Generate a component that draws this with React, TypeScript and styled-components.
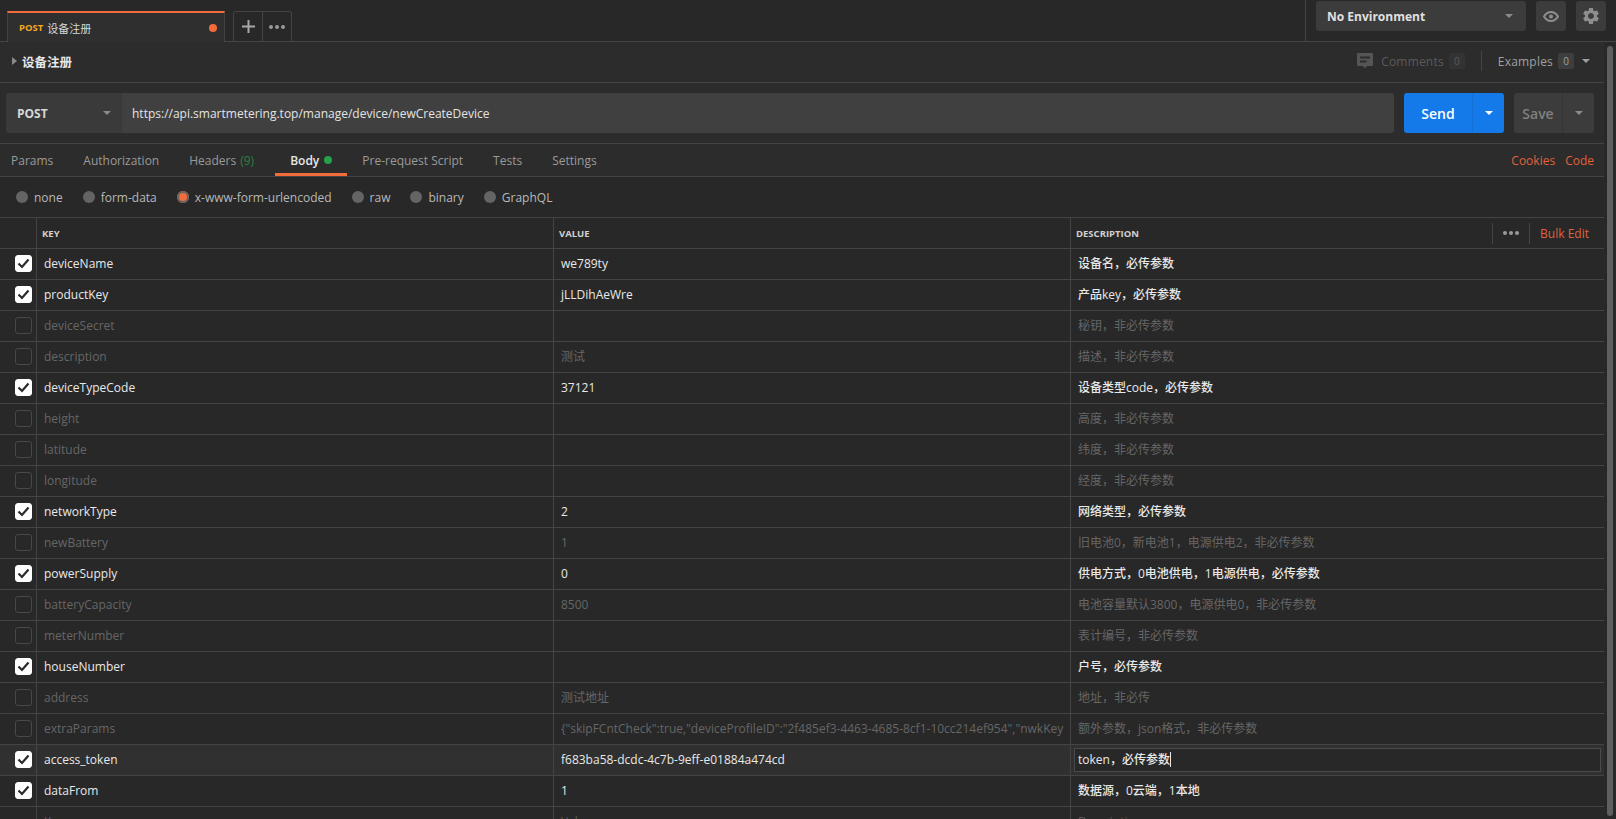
import React from "react";
import styled, { createGlobalStyle } from "styled-components";
import { MdSettings } from "react-icons/md";

const FONT = `"Open Sans", "Noto Sans CJK SC", sans-serif`;
const LINE = "#444444";
const ORANGE = "#f26b3a";

const Global = createGlobalStyle`
  html, body { margin: 0; padding: 0; background: #282828; overflow: hidden; }
  * { box-sizing: border-box; }
`;

const Page = styled.div`
  width: 1616px; height: 819px; overflow: hidden; background: #282828;
  font: 12px ${FONT}; color: #b0b0b0; display: flex; flex-direction: column;
`;

/* top bar */
const TopBar = styled.header`
  height: 42px; flex: none; display: flex; align-items: flex-end; padding-left: 7px;
  border-bottom: 1px solid ${LINE}; background: #282828;
`;
const RequestTab = styled.div`
  width: 218px; height: 31px; margin-bottom: -1px; display: flex; align-items: center;
  padding: 0 7px 0 11px; background: #2f2f2f; border-top: 2px solid ${ORANGE};
  border-left: 1px solid ${LINE}; border-right: 1px solid ${LINE}; font-size: 11px; color: #d8d8d8;
  position: relative;
`;
const TabMethod = styled.span`
  color: #f5a623; font-size: 9.5px; font-weight: 700; margin-right: 4px;
`;
const TabDot = styled.span`
  width: 8px; height: 8px; border-radius: 50%; background: ${ORANGE}; margin-left: auto;
`;
const TabTools = styled.div`
  margin-left: 8px; width: 59px; height: 30px; display: flex;
  border: 1px solid ${LINE}; border-bottom: 0; border-radius: 3px 3px 0 0;
`;
const TabTool = styled.div<{ $divided?: boolean }>`
  flex: 1; display: flex; align-items: center; justify-content: center; color: #999;
  border-left: ${(p) => (p.$divided ? `1px solid ${LINE}` : "0")};
`;
const TopRight = styled.div`
  margin-left: auto; height: 41px; align-self: flex-start; display: flex; align-items: flex-start;
  border-left: 1px solid ${LINE}; padding: 1px 10px 0 10px; gap: 10px;
`;
const EnvSelect = styled.div`
  width: 210px; height: 30px; background: #3c3c3c; border-radius: 3px; display: flex; align-items: center;
  padding: 0 13px 0 11px; justify-content: space-between; color: #e0e0e0; font-weight: 700; font-size: 12px;
`;
const IconButton = styled.div`
  width: 30px; height: 30px; background: #3c3c3c; border-radius: 3px; display: flex;
  align-items: center; justify-content: center; color: #8e8e8e;
`;
const Caret = styled.span<{ $color?: string; $size?: number }>`
  display: inline-block; width: 0; height: 0; flex: none;
  border-left: ${(p) => p.$size ?? 4}px solid transparent; border-right: ${(p) => p.$size ?? 4}px solid transparent;
  border-top: ${(p) => p.$size ?? 4}px solid ${(p) => p.$color ?? "#8a8a8a"};
`;
const ExamplesCaret = styled(Caret)`margin-left: 8px;`;

/* content */
const Workspace = styled.div`flex: 1; min-height: 0; display: flex;`;
const Main = styled.main`width: 1604px; flex: none; background: #2c2c2c;`;
const ScrollTrack = styled.div`flex: 1; padding: 4px 3px 0 3px; background: #282828;`;
const ScrollThumb = styled.div`height: 770px; width: 6px; border-radius: 3px; background: #5e5e5e;`;

const NameRow = styled.div`
  height: 41px; display: flex; align-items: center; padding: 0 14px 2px 12px;
  border-bottom: 1px solid ${LINE};
`;
const NameCaret = styled.span`
  width: 0; height: 0; border-top: 4px solid transparent; border-bottom: 4px solid transparent;
  border-left: 5px solid #8a8a8a; margin-right: 5px;
`;
const RequestName = styled.h1`
  margin: 0; font: 700 12.5px ${FONT}; color: #e6e6e6;
`;
const NameMeta = styled.div`margin-left: auto; display: flex; align-items: center;`;
const MetaLabel = styled.span<{ $dim?: boolean }>`
  color: ${(p) => (p.$dim ? "#5b5b5b" : "#a0a0a0")}; font-size: 12px; margin: 0 5px 0 8px; letter-spacing: 0.2px;
`;
const CountBadge = styled.span<{ $dim?: boolean }>`
  width: 16px; height: 16px; border-radius: 2px; display: flex; align-items: center; justify-content: center;
  font-size: 10px; background: ${(p) => (p.$dim ? "#333" : "#3e3e3e")}; color: ${(p) => (p.$dim ? "#5b5b5b" : "#a0a0a0")};
`;
const MetaDivider = styled.span`width: 1px; height: 20px; background: ${LINE}; margin: 0 8px 0 16px;`;

const UrlRow = styled.div`
  height: 61px; padding: 10px 10px 0 6px; display: flex; border-bottom: 1px solid ${LINE};
`;
const MethodSelect = styled.div`
  width: 116px; height: 40px; background: #3a3a3a; border-radius: 3px 0 0 3px; display: flex;
  align-items: center; justify-content: space-between; padding: 0 11px; color: #d8d8d8; font-weight: 700;
`;
const UrlInput = styled.div`
  width: 1272px; height: 40px; background: #404040; border-radius: 0 3px 3px 0; display: flex;
  align-items: center; padding: 0 10px; color: #e4e4e4; font-size: 12px;
`;
const SplitButton = styled.div<{ $primary?: boolean; $width: number; $main: number }>`
  width: ${(p) => p.$width}px; height: 40px; border-radius: 3px; margin-left: 10px; display: grid;
  grid-template-columns: ${(p) => p.$main}px 1fr;
  background: ${(p) => (p.$primary ? "#147ae9" : "#3c3c3c")};
  color: ${(p) => (p.$primary ? "#fff" : "#808080")};
  font-size: 14px; font-weight: 600;
`;
const SplitLabel = styled.div<{ $primary?: boolean }>`
  display: flex; align-items: center; justify-content: center;
  border-right: 1px solid ${(p) => (p.$primary ? "#1270d4" : "#343434")};
`;
const SplitArrow = styled.div`display: flex; align-items: center; justify-content: center;`;

const TabsRow = styled.nav`
  height: 33px; display: flex; border-bottom: 1px solid ${LINE}; position: relative;
`;
const TabItem = styled.div<{ $active?: boolean; $left?: number; $right?: number }>`
  padding: 3px ${(p) => p.$right ?? 15}px 0 ${(p) => p.$left ?? 15}px; height: 32px; display: flex; align-items: center;
  color: ${(p) => (p.$active ? "#e6e6e6" : "#9a9a9a")}; font-size: 12px;
  font-weight: ${(p) => (p.$active ? 600 : 400)};
  border-bottom: 3px solid ${(p) => (p.$active ? ORANGE : "transparent")};
`;
const HeaderCount = styled.span`color: #26833f; margin-left: 4px;`;
const BodyDot = styled.span`width: 8px; height: 8px; border-radius: 50%; background: #26a04b; margin-left: 5px;`;
const TabLinks = styled.div`margin-left: auto; display: flex; align-items: center; gap: 10px; padding-right: 10px; color: #e0623a;`;

const BodyPanel = styled.section`background: #282828;`;
const BodyTypes = styled.div`
  height: 41px; display: flex; align-items: center; padding-left: 16px; border-bottom: 1px solid ${LINE};
`;
const RadioOption = styled.label`
  display: flex; align-items: center; color: #b8b8b8; font-size: 12px; margin-right: 20px;
`;
const Radio = styled.span<{ $on?: boolean }>`
  width: 12px; height: 12px; border-radius: 50%; background: ${(p) => (p.$on ? ORANGE : "#646464")};
  margin-right: 6px; flex: none;
  box-shadow: ${(p) => (p.$on ? "inset 0 0 0 2px #646464" : "none")};
`;

const Grid = styled.div`
  display: grid; grid-template-columns: 37px 517px 517px 533px;
`;
const HeadRow = styled(Grid)`height: 31px; border-bottom: 1px solid ${LINE};`;
const HeadCell = styled.div<{ $last?: boolean }>`
  border-right: ${(p) => (p.$last ? "0" : `1px solid ${LINE}`)}; display: flex; align-items: center;
  padding-left: 5px; font-size: 9.5px; font-weight: 700; color: #d0d0d0;
`;
const BulkTools = styled.div`margin-left: auto; display: flex; align-items: center; height: 21px; padding-right: 15px;`;
const BulkDots = styled.span`
  border-left: 1px solid ${LINE}; border-right: 1px solid ${LINE}; height: 21px; width: 38px;
  display: flex; align-items: center; justify-content: center; color: #9a9a9a; margin-right: 10px;
`;
const BulkEdit = styled.span`color: #e0623a; font-size: 12px; font-weight: 400;`;

const Row = styled(Grid)<{ $hover?: boolean }>`
  height: 31px; border-bottom: 1px solid ${LINE}; background: ${(p) => (p.$hover ? "#303030" : "#282828")};
`;
const CheckCell = styled.div`
  border-right: 1px solid ${LINE}; display: flex; align-items: center; padding: 0 0 1px 15px;
`;
const CheckBox = styled.span<{ $on: boolean }>`
  width: 17px; height: 17px; border-radius: 3px; display: flex; align-items: center; justify-content: center;
  background: ${(p) => (p.$on ? "#fff" : "transparent")}; border: 1px solid ${(p) => (p.$on ? "#fff" : "#484848")};
`;
const Cell = styled.div<{ $on: boolean; $last?: boolean; $desc?: boolean }>`
  border-right: ${(p) => (p.$last ? "0" : `1px solid ${LINE}`)}; display: flex; align-items: center;
  padding: 0 6px 2px 7px; font-size: 12px; white-space: nowrap; overflow: hidden;
  font-weight: ${(p) => (p.$desc && p.$on ? 500 : 400)};
  color: ${(p) => (p.$on ? "#e8e8e8" : "#666666")};
`;
const EditCell = styled.div`display: flex; align-items: center; padding: 0 3px; font-weight: 500;`;
const EditBox = styled.div`
  flex: 1; height: 24px; border: 1px solid #4a4a4a; display: flex; align-items: center;
  padding: 0 0 2px 3px; background: #282828; color: #e8e8e8;
`;
const Caretbar = styled.span`width: 1px; height: 15px; background: #e8e8e8;`;
const Placeholder = styled.span`color: #5c5c5c;`;

type P = { k: string; v?: string; d: string; on?: boolean };
const rows: P[] = [
  { k: "deviceName", v: "we789ty", d: "设备名，必传参数", on: true },
  { k: "productKey", v: "jLLDihAeWre", d: "产品key，必传参数", on: true },
  { k: "deviceSecret", d: "秘钥，非必传参数" },
  { k: "description", v: "测试", d: "描述，非必传参数" },
  { k: "deviceTypeCode", v: "37121", d: "设备类型code，必传参数", on: true },
  { k: "height", d: "高度，非必传参数" },
  { k: "latitude", d: "纬度，非必传参数" },
  { k: "longitude", d: "经度，非必传参数" },
  { k: "networkType", v: "2", d: "网络类型，必传参数", on: true },
  { k: "newBattery", v: "1", d: "旧电池0，新电池1，电源供电2，非必传参数" },
  { k: "powerSupply", v: "0", d: "供电方式，0电池供电，1电源供电，必传参数", on: true },
  { k: "batteryCapacity", v: "8500", d: "电池容量默认3800，电源供电0，非必传参数" },
  { k: "meterNumber", d: "表计编号，非必传参数" },
  { k: "houseNumber", d: "户号，必传参数", on: true },
  { k: "address", v: "测试地址", d: "地址，非必传" },
  { k: "extraParams", v: '{"skipFCntCheck":true,"deviceProfileID":"2f485ef3-4463-4685-8cf1-10cc214ef954","nwkKey', d: "额外参数，json格式，非必传参数" },
  { k: "access_token", v: "f683ba58-dcdc-4c7b-9eff-e01884a474cd", d: "token，必传参数", on: true },
  { k: "dataFrom", v: "1", d: "数据源，0云端，1本地", on: true },
];

const Check = () => (
  <svg width="13" height="11" viewBox="0 0 13 11" fill="none">
    <path d="M1.5 5.5 L5 9 L11.5 1.5" stroke="#2a2a2a" strokeWidth="2.2" />
  </svg>
);
const Dots = () => (
  <svg width="16" height="4" viewBox="0 0 16 4" fill="currentColor">
    <circle cx="2" cy="2" r="2" /><circle cx="8" cy="2" r="2" /><circle cx="14" cy="2" r="2" />
  </svg>
);
const Plus = () => (
  <svg width="13" height="13" viewBox="0 0 13 13" fill="#a8a8a8">
    <rect x="5.5" width="2" height="13" /><rect y="5.5" width="13" height="2" />
  </svg>
);
const Eye = () => (
  <svg width="16" height="11" viewBox="0 0 16 11" fill="none">
    <path d="M1 5.5 C3 2.2 5.5 1 8 1 C10.5 1 13 2.2 15 5.5 C13 8.8 10.5 10 8 10 C5.5 10 3 8.8 1 5.5 Z" stroke="#8e8e8e" strokeWidth="2" />
    <circle cx="8" cy="5.5" r="2" fill="#8e8e8e" />
  </svg>
);
const CommentIcon = () => (
  <svg width="16" height="16" viewBox="0 0 16 16">
    <path d="M0 1 Q0 0 1 0 H15 Q16 0 16 1 V12 Q16 13 15 13 H10 L8 15.5 L6 13 H1 Q0 13 0 12 Z" fill="#555" />
    <rect x="3" y="3.5" width="10" height="2" fill="#2c2c2c" />
    <rect x="3" y="7.5" width="6.5" height="2" fill="#2c2c2c" />
  </svg>
);

export default function App() {
  return (
    <Page>
      <Global />
      <TopBar>
        <RequestTab>
          <TabMethod>POST</TabMethod>设备注册<TabDot />
        </RequestTab>
        <TabTools>
          <TabTool><Plus /></TabTool>
          <TabTool $divided><Dots /></TabTool>
        </TabTools>
        <TopRight>
          <EnvSelect>No Environment<Caret /></EnvSelect>
          <IconButton><Eye /></IconButton>
          <IconButton><MdSettings size={20} /></IconButton>
        </TopRight>
      </TopBar>
      <Workspace>
        <Main>
          <NameRow>
            <NameCaret />
            <RequestName>设备注册</RequestName>
            <NameMeta>
              <CommentIcon />
              <MetaLabel $dim>Comments</MetaLabel>
              <CountBadge $dim>0</CountBadge>
              <MetaDivider />
              <MetaLabel>Examples</MetaLabel>
              <CountBadge>0</CountBadge>
              <ExamplesCaret $color="#a0a0a0" />
            </NameMeta>
          </NameRow>
          <UrlRow>
            <MethodSelect>POST<Caret /></MethodSelect>
            <UrlInput>https://api.smartmetering.top/manage/device/newCreateDevice</UrlInput>
            <SplitButton $primary $width={100} $main={69}>
              <SplitLabel $primary>Send</SplitLabel>
              <SplitArrow><Caret $color="#fff" /></SplitArrow>
            </SplitButton>
            <SplitButton $width={80} $main={49}>
              <SplitLabel>Save</SplitLabel>
              <SplitArrow><Caret /></SplitArrow>
            </SplitButton>
          </UrlRow>
          <TabsRow>
            <TabItem $left={11}>Params</TabItem>
            <TabItem>Authorization</TabItem>
            <TabItem $right={21}>Headers<HeaderCount>(9)</HeaderCount></TabItem>
            <TabItem $active>Body<BodyDot /></TabItem>
            <TabItem>Pre-request Script</TabItem>
            <TabItem>Tests</TabItem>
            <TabItem>Settings</TabItem>
            <TabLinks><span>Cookies</span><span>Code</span></TabLinks>
          </TabsRow>
          <BodyPanel>
            <BodyTypes>
              <RadioOption><Radio />none</RadioOption>
              <RadioOption><Radio />form-data</RadioOption>
              <RadioOption><Radio $on />x-www-form-urlencoded</RadioOption>
              <RadioOption><Radio />raw</RadioOption>
              <RadioOption><Radio />binary</RadioOption>
              <RadioOption><Radio />GraphQL</RadioOption>
            </BodyTypes>
            <HeadRow>
              <HeadCell />
              <HeadCell>KEY</HeadCell>
              <HeadCell>VALUE</HeadCell>
              <HeadCell $last>
                DESCRIPTION
                <BulkTools>
                  <BulkDots><Dots /></BulkDots>
                  <BulkEdit>Bulk Edit</BulkEdit>
                </BulkTools>
              </HeadCell>
            </HeadRow>
            {rows.map((r) => (
              <Row key={r.k} $hover={r.k === "access_token"}>
                <CheckCell>
                  <CheckBox $on={!!r.on}>{r.on && <Check />}</CheckBox>
                </CheckCell>
                <Cell $on={!!r.on}>{r.k}</Cell>
                <Cell $on={!!r.on}>{r.v}</Cell>
                {r.k === "access_token" ? (
                  <EditCell>
                    <EditBox>{r.d}<Caretbar /></EditBox>
                  </EditCell>
                ) : (
                  <Cell $on={!!r.on} $last $desc>{r.d}</Cell>
                )}
              </Row>
            ))}
            <Row>
              <CheckCell />
              <Cell $on={false}><Placeholder>Key</Placeholder></Cell>
              <Cell $on={false}><Placeholder>Value</Placeholder></Cell>
              <Cell $on={false} $last><Placeholder>Description</Placeholder></Cell>
            </Row>
          </BodyPanel>
        </Main>
        <ScrollTrack><ScrollThumb /></ScrollTrack>
      </Workspace>
    </Page>
  );
}
